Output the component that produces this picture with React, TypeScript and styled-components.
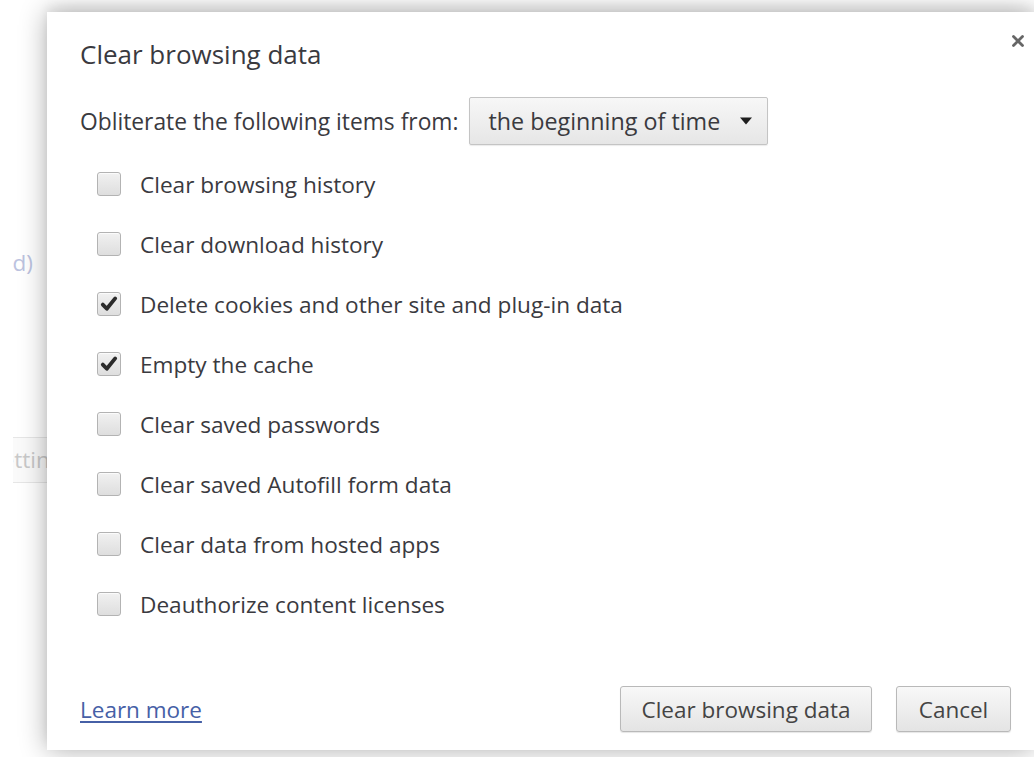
import React, { useState } from 'react';
import styled, { createGlobalStyle } from 'styled-components';

const GlobalStyle = createGlobalStyle`
  html, body {
    margin: 0;
    padding: 0;
    width: 1034px;
    height: 757px;
    overflow: hidden;
    background: #fff;
  }
  body {
    font-family: "Open Sans", "Noto Sans", "Liberation Sans", sans-serif;
    color: #3a3a3f;
  }
`;

const Page = styled.div`
  position: relative;
  width: 1034px;
  height: 757px;
  overflow: hidden;
  background: #fff;
`;

// settings page that sits under the overlay, mostly hidden by it
const SettingsBehind = styled.div`
  margin-left: 13px;
  width: 60px;
  height: 100%;
  overflow: hidden;
  display: flex;
  flex-direction: column;
  font-size: 22.5px;
`;

const FadedLink = styled.div`
  margin-top: 246px;
  height: 34px;
  line-height: 34px;
  white-space: nowrap;
  color: #bcc3e0;
  margin-left: -96px;
`;

const FadedButton = styled.div`
  margin-top: 157px;
  height: 44px;
  line-height: 44px;
  margin-left: -127px;
  padding: 0 14px;
  width: 200px;
  white-space: nowrap;
  color: #c9c9c9;
  border: 1px solid #e6e6e6;
  border-radius: 3px;
  background: #fafafa;
`;

const Dialog = styled.div`
  position: absolute;
  left: 47px;
  top: 12px;
  width: 987px;
  height: 738px;
  box-sizing: border-box;
  padding: 24px 23px 18px 33px;
  background: #fff;
  box-shadow: 0 0 26px rgba(0, 0, 0, 0.32), 0 -6px 10px rgba(0, 0, 0, 0.05);
  display: flex;
  flex-direction: column;
`;

const CloseButton = styled.button`
  position: absolute;
  top: 22px;
  right: 9px;
  width: 14px;
  height: 14px;
  padding: 0;
  border: 0;
  background: none;
  cursor: pointer;
  display: flex;
`;

const Title = styled.h1`
  margin: 0;
  font-size: 26px;
  line-height: 36px;
  font-weight: 400;
  color: #3a3a3f;
`;

const RangeRow = styled.div`
  margin-top: 25px;
  display: flex;
  align-items: center;
  gap: 11px;
  font-size: 22.8px;
`;

const RangeSelect = styled.div`
  height: 48px;
  box-sizing: border-box;
  padding: 0 15px 0 18px;
  display: flex;
  align-items: center;
  gap: 20px;
  font-size: 23.3px;
  border: 1px solid #c4c4c4;
  border-radius: 2px;
  background: linear-gradient(#f7f7f7, #e6e6e6);
  box-shadow: 0 1px 1px rgba(0, 0, 0, 0.08);
  color: #3a3a3f;
`;

const ItemList = styled.div`
  margin-top: 9px;
  display: flex;
  flex-direction: column;
`;

const Item = styled.label`
  height: 60px;
  padding-left: 17px;
  display: flex;
  align-items: center;
  gap: 19px;
  font-size: 22.6px;
  cursor: default;
`;

const Box = styled.span<{ $checked: boolean }>`
  width: 24px;
  height: 24px;
  box-sizing: border-box;
  flex: none;
  border: 1px solid #b3b3b3;
  border-radius: 3px;
  background: linear-gradient(#f1f1f1, #dedede);
  box-shadow: inset 0 1px 1px rgba(255, 255, 255, 0.8);
  display: flex;
  align-items: center;
  justify-content: center;
`;

const Footer = styled.div`
  margin-top: auto;
  display: flex;
  align-items: center;
  gap: 24px;
`;

const LearnMore = styled.a`
  margin-right: auto;
  font-size: 22.5px;
  color: #4660a6;
  text-decoration: underline;
  text-underline-offset: 3px;
  cursor: pointer;
`;

const Button = styled.button<{ $wide?: boolean }>`
  height: 46px;
  min-width: ${(p) => (p.$wide ? '252px' : '115px')};
  box-sizing: border-box;
  padding: 0 20px;
  font-family: inherit;
  font-size: 22.5px;
  color: #444;
  border: 1px solid #b9b9b9;
  border-radius: 3px;
  background: linear-gradient(#f8f8f8, #e4e4e4);
  box-shadow: 0 1px 1px rgba(0, 0, 0, 0.1);
  cursor: pointer;
`;

const items = [
  { label: 'Clear browsing history', checked: false },
  { label: 'Clear download history', checked: false },
  { label: 'Delete cookies and other site and plug-in data', checked: true },
  { label: 'Empty the cache', checked: true },
  { label: 'Clear saved passwords', checked: false },
  { label: 'Clear saved Autofill form data', checked: false },
  { label: 'Clear data from hosted apps', checked: false },
  { label: 'Deauthorize content licenses', checked: false },
];

const Check = () => (
  <svg width="20" height="20" viewBox="0 0 20 20">
    <path d="M3.8 10.6 L7.8 14.8 L16.2 4.4" fill="none" stroke="#2b2b2b" strokeWidth="3.8" strokeLinecap="round" strokeLinejoin="round" />
  </svg>
);

const App: React.FC = () => {
  const [checked, setChecked] = useState(items.map((i) => i.checked));
  const toggle = (i: number) => setChecked((c) => c.map((v, j) => (j === i ? !v : v)));

  return (
    <Page>
      <GlobalStyle />
      <SettingsBehind>
        <FadedLink>(Advanced)</FadedLink>
        <FadedButton>Content settings</FadedButton>
      </SettingsBehind>
      <Dialog>
        <CloseButton aria-label="Close">
          <svg width="14" height="14" viewBox="0 0 14 14">
            <path d="M2.5 2.5 L11.5 11.5 M11.5 2.5 L2.5 11.5" stroke="#666" strokeWidth="2.8" strokeLinecap="round" />
          </svg>
        </CloseButton>
        <Title>Clear browsing data</Title>
        <RangeRow>
          <span>Obliterate the following items from:</span>
          <RangeSelect>
            <span>the beginning of time</span>
            <svg width="12" height="8" viewBox="0 0 12 8">
              <path d="M0 0.5 H12 L6 7.5 Z" fill="#1e1e1e" />
            </svg>
          </RangeSelect>
        </RangeRow>
        <ItemList>
          {items.map((item, i) => (
            <Item key={item.label} onClick={() => toggle(i)}>
              <Box $checked={checked[i]}>{checked[i] && <Check />}</Box>
              <span>{item.label}</span>
            </Item>
          ))}
        </ItemList>
        <Footer>
          <LearnMore>Learn more</LearnMore>
          <Button $wide>Clear browsing data</Button>
          <Button>Cancel</Button>
        </Footer>
      </Dialog>
    </Page>
  );
};

export default App;
